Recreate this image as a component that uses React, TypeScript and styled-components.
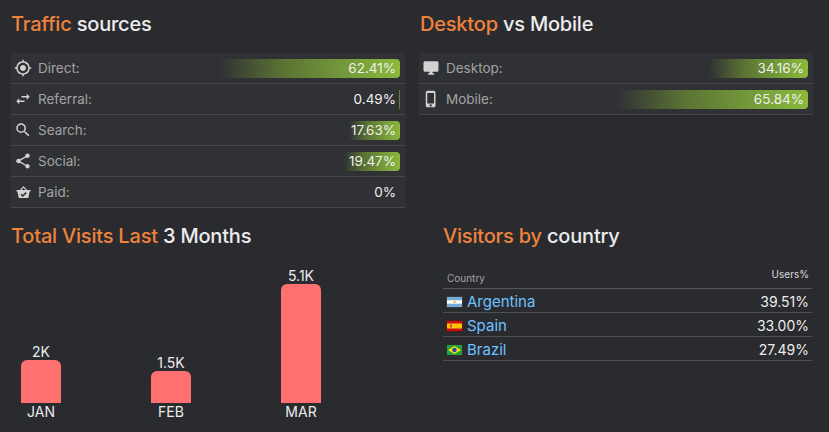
import React from 'react';
import styled, { createGlobalStyle } from 'styled-components';
import {
  MdGpsFixed,
  MdSwapHoriz,
  MdSearch,
  MdShare,
  MdDesktopWindows,
  MdPhoneIphone,
} from 'react-icons/md';

const GlobalStyle = createGlobalStyle`
  html, body {
    margin: 0;
    padding: 0;
    background: #2a2b2f;
  }
  body {
    font-family: Inter, 'Noto Sans', sans-serif;
    color: #e6e6e6;
  }
`;

const Page = styled.div`
  width: 829px;
  height: 432px;
  box-sizing: border-box;
  padding: 12px 11px 0 11px;
  display: grid;
  grid-template-columns: 394px 394px;
  grid-template-rows: 212px auto;
  column-gap: 14px;
`;

const Section = styled.section<{ $indent?: number }>`
  display: flex;
  flex-direction: column;
  padding-left: ${({ $indent }) => $indent || 0}px;
`;

const Title = styled.h2<{ $indent?: number }>`
  margin: 0 0 17px ${({ $indent }) => $indent || 0}px;
  font-size: 20px;
  line-height: 24px;
  font-weight: 500;
  color: #ececec;
  letter-spacing: -0.2px;
`;

const Accent = styled.span`
  color: #f0833c;
`;

const Table = styled.div`
  background: #303134;
  display: flex;
  flex-direction: column;
`;

const Row = styled.div`
  height: 30px;
  border-bottom: 1px solid #47484b;
  display: flex;
  align-items: center;
  padding: 0 5px 0 2px;
`;

const IconBox = styled.span`
  width: 20px;
  display: flex;
  justify-content: center;
  color: #d2d2d2;
  font-size: 18px;
  margin-right: 5px;
`;

const Label = styled.span`
  flex: 1;
  font-size: 13.5px;
  color: #a3a3a5;
`;

const BarCell = styled.div`
  width: 290px;
  height: 19px;
  position: relative;
  display: flex;
  justify-content: flex-end;
  align-items: center;
`;

const Fill = styled.div`
  position: absolute;
  right: 0;
  top: 0;
  bottom: 0;
  border-radius: 0 4px 4px 0;
  background: linear-gradient(
    to right,
    rgba(100, 130, 50, 0) 0%,
    rgba(98, 126, 52, 0.85) 35%,
    #78a03a 75%,
    #8bb83c 100%
  );
`;

const Percent = styled.span`
  position: relative;
  font-size: 13.5px;
  color: #f0f0f0;
  padding-right: 4px;
`;

const Chart = styled.div`
  display: flex;
  align-items: flex-end;
  gap: 70px;
  height: 158px;
  margin-top: -2px;
`;

const Column = styled.div`
  width: 60px;
  display: flex;
  flex-direction: column;
  align-items: center;
`;

const Value = styled.span`
  font-size: 14px;
  line-height: 16px;
  color: #ececec;
`;

const Bar = styled.div<{ $h: number }>`
  width: 40px;
  height: ${({ $h }) => $h}px;
  background: #ff7070;
  border-radius: 6px 6px 0 0;
`;

const Month = styled.span`
  font-size: 14px;
  line-height: 18px;
  color: #ececec;
`;

const CountryTable = styled.div`
  width: 369px;
  margin-top: 2px;
`;

const HeadRow = styled.div`
  display: flex;
  justify-content: space-between;
  height: 21px;
  border-bottom: 1px solid #55565a;
  padding: 0 3px 0 4px;
`;

const HeadCell = styled.span<{ $light?: boolean }>`
  font-size: 10px;
  line-height: ${({ $light }) => ($light ? '14px' : '22px')};
  color: ${({ $light }) => ($light ? '#dcdcdc' : '#a3a3a5')};
`;

const CountryRow = styled.div`
  display: flex;
  align-items: center;
  height: 23px;
  padding-top: 2px;
  box-sizing: border-box;
  height: 24px;
  border-bottom: 1px solid #4d4e52;
  padding-left: 3px;
  padding-right: 3px;
`;

const CountryName = styled.span`
  flex: 1;
  font-size: 15px;
  color: #6ec2ff;
  margin-left: 4px;
`;

const CountryValue = styled.span`
  font-size: 14px;
  color: #ececec;
`;

const BasketIcon = () => (
  <svg width="15" height="14" viewBox="0 0 15 14" fill="currentColor">
    <path d="M7.5 1 L11.5 5.5 L10 5.5 L7.5 2.7 L5 5.5 L3.5 5.5 Z" />
    <path d="M0.5 5 H14.5 V6.6 H13.6 L12.3 13 H2.7 L1.4 6.6 H0.5 Z" />
    <path d="M5 9.2 L6.8 11 L10.2 7.6" stroke="#303134" strokeWidth="1.5" fill="none" />
  </svg>
);

const FlagAR = () => (
  <svg width="17" height="12" viewBox="0 0 17 12">
    <rect x="0" y="0" width="17" height="12" fill="#3a3a3a" />
    <rect x="1" y="1" width="15" height="10" fill="#fff" />
    <rect x="1" y="1" width="15" height="3.3" fill="#75aadb" />
    <rect x="1" y="7.7" width="15" height="3.3" fill="#75aadb" />
    <circle cx="8.5" cy="6" r="1.2" fill="#f6b40e" />
  </svg>
);

const FlagES = () => (
  <svg width="17" height="12" viewBox="0 0 17 12">
    <rect x="0" y="0" width="17" height="12" fill="#5a1a1a" />
    <rect x="1" y="1" width="15" height="10" fill="#c60b1e" />
    <rect x="1" y="3.5" width="15" height="5" fill="#ffc400" />
    <rect x="4" y="4.5" width="2" height="3" fill="#c8502a" />
  </svg>
);

const FlagBR = () => (
  <svg width="17" height="12" viewBox="0 0 17 12">
    <rect x="0" y="0" width="17" height="12" fill="#2e2e1e" />
    <rect x="1" y="1" width="15" height="10" fill="#229e45" />
    <polygon points="8.5,2 15,6 8.5,10 2,6" fill="#f8e509" />
    <circle cx="8.5" cy="6" r="2.3" fill="#2b49a3" />
  </svg>
);

type Source = { icon: React.ReactNode; label: string; value: number; text: string };

const sources: Source[] = [
  { icon: <MdGpsFixed />, label: 'Direct:', value: 62.41, text: '62.41%' },
  { icon: <MdSwapHoriz />, label: 'Referral:', value: 0.49, text: '0.49%' },
  { icon: <MdSearch />, label: 'Search:', value: 17.63, text: '17.63%' },
  { icon: <MdShare />, label: 'Social:', value: 19.47, text: '19.47%' },
  { icon: <BasketIcon />, label: 'Paid:', value: 0, text: '0%' },
];

const devices: Source[] = [
  { icon: <MdDesktopWindows />, label: 'Desktop:', value: 34.16, text: '34.16%' },
  { icon: <MdPhoneIphone />, label: 'Mobile:', value: 65.84, text: '65.84%' },
];

const months = [
  { name: 'JAN', value: '2K', h: 43 },
  { name: 'FEB', value: '1.5K', h: 32 },
  { name: 'MAR', value: '5.1K', h: 119 },
];

const countries = [
  { flag: <FlagAR />, name: 'Argentina', value: '39.51%' },
  { flag: <FlagES />, name: 'Spain', value: '33.00%' },
  { flag: <FlagBR />, name: 'Brazil', value: '27.49%' },
];

const SourceRow = ({ item }: { item: Source }) => (
  <Row>
    <IconBox>{item.icon}</IconBox>
    <Label>{item.label}</Label>
    <BarCell>
      {item.value > 0 && <Fill style={{ width: `${item.value}%` }} />}
      <Percent>{item.text}</Percent>
    </BarCell>
  </Row>
);

const App = () => {
  return (
    <>
      <GlobalStyle />
      <Page>
        <Section>
          <Title>
            <Accent>Traffic</Accent> sources
          </Title>
          <Table>
            {sources.map((s) => (
              <SourceRow key={s.label} item={s} />
            ))}
          </Table>
        </Section>

        <Section>
          <Title $indent={1}>
            <Accent>Desktop</Accent> vs Mobile
          </Title>
          <Table>
            {devices.map((d) => (
              <SourceRow key={d.label} item={d} />
            ))}
          </Table>
        </Section>

        <Section>
          <Title>
            <Accent>Total Visits Last</Accent> 3 Months
          </Title>
          <Chart>
            {months.map((m) => (
              <Column key={m.name}>
                <Value>{m.value}</Value>
                <Bar $h={m.h} />
                <Month>{m.name}</Month>
              </Column>
            ))}
          </Chart>
        </Section>

        <Section $indent={24}>
          <Title>
            <Accent>Visitors by</Accent> country
          </Title>
          <CountryTable>
            <HeadRow>
              <HeadCell>Country</HeadCell>
              <HeadCell $light>Users%</HeadCell>
            </HeadRow>
            {countries.map((c) => (
              <CountryRow key={c.name}>
                {c.flag}
                <CountryName>{c.name}</CountryName>
                <CountryValue>{c.value}</CountryValue>
              </CountryRow>
            ))}
          </CountryTable>
        </Section>
      </Page>
    </>
  );
};

export default App;
